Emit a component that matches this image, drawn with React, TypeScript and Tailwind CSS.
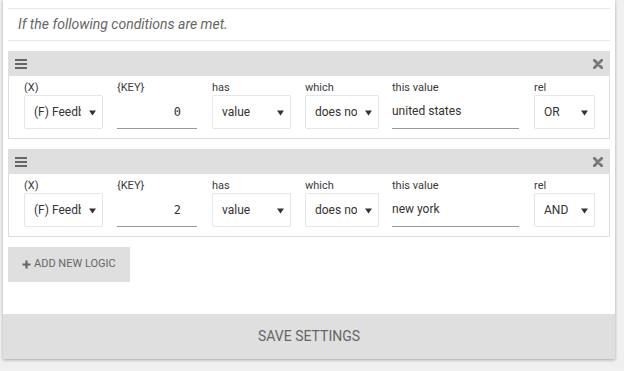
import React from "react";

const rows = [
  { key: "0", value: "united states", rel: "OR" },
  { key: "2", value: "new york", rel: "AND" },
];

function Caret() {
  return (
    <svg
      className="absolute right-[6px] top-[14px]"
      width="7"
      height="6"
      viewBox="0 0 7 6"
    >
      <path d="M0 0.5 L7 0.5 L3.5 5.5 Z" fill="#333" />
    </svg>
  );
}

function Sel({ cls, text }: { cls: string; text: string }) {
  return (
    <div
      className={`relative flex h-[34px] items-center rounded-[2px] border border-[#e6e6e6] bg-white pl-[9px] pr-[21px] ${cls}`}
    >
      <div className="overflow-hidden whitespace-nowrap text-[12px] text-[#333]">{text}</div>
      <Caret />
    </div>
  );
}

function Label({ children }: { children: React.ReactNode }) {
  return <div className="mb-[1px] h-[13px] text-[11px] leading-[13px] text-[#3a3a3a]">{children}</div>;
}

function Hamburger() {
  return (
    <div className="flex w-[12px] flex-col gap-[2px]">
      <div className="h-[2px] bg-[#666]" />
      <div className="h-[2px] bg-[#666]" />
      <div className="h-[2px] bg-[#666]" />
    </div>
  );
}

function Times() {
  return (
    <svg width="10" height="10" viewBox="0 0 10 10">
      <path d="M1.3 1.3 L8.7 8.7 M8.7 1.3 L1.3 8.7" stroke="#777" strokeWidth="2.8" strokeLinecap="round" />
    </svg>
  );
}

function Block({ k, value, rel }: { k: string; value: string; rel: string }) {
  return (
    <div>
      <div className="flex h-[25px] items-center justify-between bg-[#dfdfdf] pl-[7px] pr-[7px]">
        <Hamburger />
        <Times />
      </div>
      <div className="flex border-x border-b border-[#dddddd] bg-white pb-[9px] pl-[15px] pt-[5px]">
        <div className="w-[93px]">
          <Label>(X)</Label>
          <Sel cls="w-[79px]" text="(F) Feedback" />
        </div>
        <div className="w-[95px]">
          <Label>{"{KEY}"}</Label>
          <div className="flex h-[34px] w-[80px] items-center justify-end border-b border-[#999] pr-[16px] font-['DejaVu_Sans_Mono',monospace] text-[12px] text-[#333]">
            {k}
          </div>
        </div>
        <div className="w-[93px]">
          <Label>has</Label>
          <Sel cls="w-[79px]" text="value" />
        </div>
        <div className="w-[87px]">
          <Label>which</Label>
          <Sel cls="w-[74px]" text="does not contain" />
        </div>
        <div className="w-[142px]">
          <Label>this value</Label>
          <div className="flex h-[34px] w-[127px] items-center border-b border-[#999] pb-[2px] text-[12px] text-[#333]">
            {value}
          </div>
        </div>
        <div className="w-[61px]">
          <Label>rel</Label>
          <Sel cls="w-[61px]" text={rel} />
        </div>
      </div>
    </div>
  );
}

export default function App() {
  return (
    <div className="h-[371px] w-[624px] overflow-hidden bg-[#f0f0f0] font-['Roboto','Liberation_Sans',sans-serif]">
      <div className="ml-[3px] w-[612px] bg-white shadow-[0_1px_3px_rgba(0,0,0,0.3)]">
        <div className="px-[5px]">
          <div className="h-[9px] border-b border-[#e8e8e8]" />
          <div className="flex h-[31px] items-center px-[10px] text-[14px] italic text-[#666]">
            If the following conditions are met.
          </div>
          <div className="border-t border-[#e8e8e8] pt-[10px]">
            <div className="flex flex-col gap-[10px]">
              {rows.map((r, i) => (
                <Block key={i} k={r.key} value={r.value} rel={r.rel} />
              ))}
            </div>
            <div className="pb-[32px] pt-[10px]">
              <div className="flex h-[35px] w-[122px] items-center gap-[3px] bg-[#dfdfdf] pl-[14px] text-[11px] text-[#666]">
                <svg width="9" height="9" viewBox="0 0 9 9">
                  <path d="M4.5 0.5 V8.5 M0.5 4.5 H8.5" stroke="#666" strokeWidth="2.2" />
                </svg>
                <span>ADD NEW LOGIC</span>
              </div>
            </div>
          </div>
        </div>
        <div className="flex h-[45px] items-center justify-center bg-[#dfdfdf] text-[14px] text-[#666]">
          SAVE SETTINGS
        </div>
      </div>
    </div>
  );
}
